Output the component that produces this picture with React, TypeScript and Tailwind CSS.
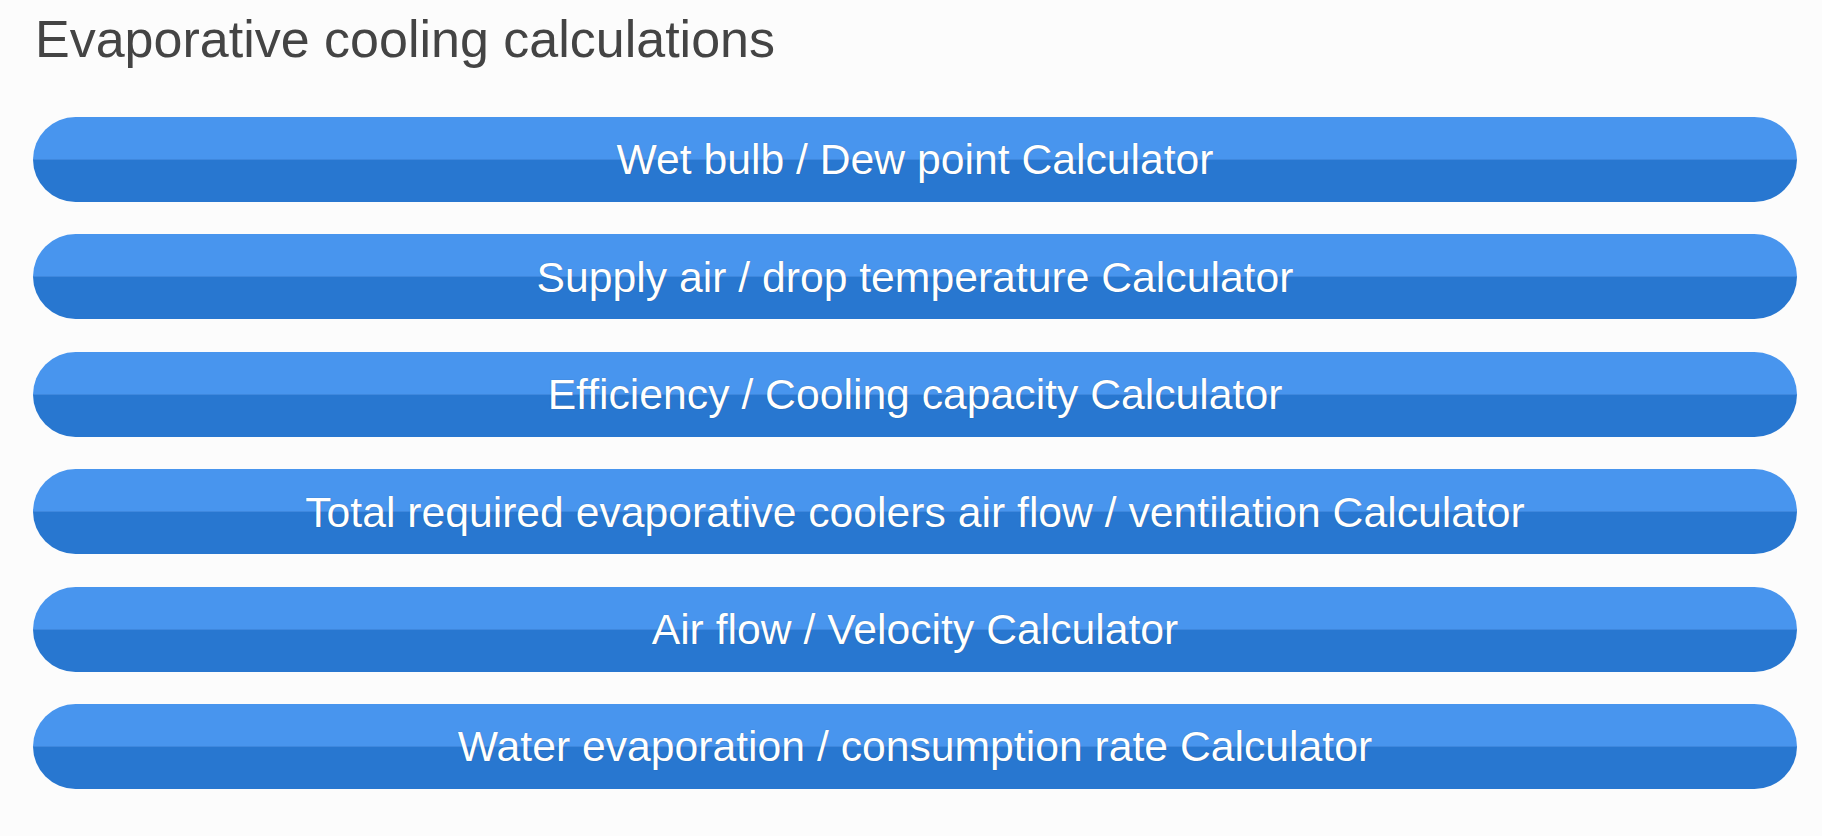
const items = [
  "Wet bulb / Dew point Calculator",
  "Supply air / drop temperature Calculator",
  "Efficiency / Cooling capacity Calculator",
  "Total required evaporative coolers air flow / ventilation Calculator",
  "Air flow / Velocity Calculator",
  "Water evaporation / consumption rate Calculator",
];

export default function App() {
  return (
    <div className="min-h-[836px] bg-[#fcfcfc] pl-[33px] pr-[25px] pt-[7px] font-['Liberation_Sans',Arial,sans-serif]">
      <h1 className="pl-[2px] text-[52px] leading-[64px] text-[#444444]">Evaporative cooling calculations</h1>
      <div className="mt-[46px] flex flex-col gap-[32.4px]">
        {items.map((label) => (
          <a
            key={label}
            href="#"
            className="flex h-[85px] items-center justify-center rounded-full bg-[linear-gradient(to_bottom,#4895ee_0%,#4895ee_49%,#3f88de_49%,#3f88de_51%,#2877d0_51%,#2877d0_100%)] text-[42.7px] text-white [text-shadow:0_0_1px_rgba(0,0,0,0.35)]"
          >
            {label}
          </a>
        ))}
      </div>
    </div>
  );
}
